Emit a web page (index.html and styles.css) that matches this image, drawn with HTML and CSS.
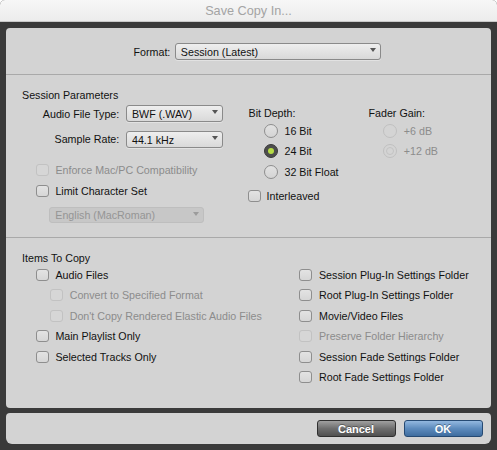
FILE: index.html
```html
<!DOCTYPE html>
<html>
<head>
<meta charset="utf-8">
<link rel="stylesheet" href="styles.css">
</head>
<body>
<div class="window">
  <div class="titlebar">Save Copy In...</div>
  <div class="frame">
    <div class="panel">
      <div class="format-row">
        <span class="format-label">Format:</span>
        <div class="select format-select"><span>Session (Latest)</span><i class="arrow"></i></div>
      </div>

      <div class="section session">
        <div class="section-title">Session Parameters</div>
        <div class="cols">
          <div class="col-left">
            <div class="field-grid">
              <span class="field-label">Audio File Type:</span>
              <div class="select small"><span>BWF (.WAV)</span><i class="arrow"></i></div>
              <span class="field-label">Sample Rate:</span>
              <div class="select small"><span>44.1 kHz</span><i class="arrow"></i></div>
            </div>
            <div class="checks indent1 compat">
              <div class="check disabled"><span class="box"></span><span>Enforce Mac/PC Compatibility</span></div>
              <div class="check"><span class="box"></span><span>Limit Character Set</span></div>
            </div>
            <div class="select charset disabled"><span>English (MacRoman)</span><i class="arrow"></i></div>
          </div>

          <div class="col-bit">
            <div class="col-title">Bit Depth:</div>
            <div class="radios">
              <div class="radio"><span class="dot"></span><span>16 Bit</span></div>
              <div class="radio on"><span class="dot"></span><span>24 Bit</span></div>
              <div class="radio"><span class="dot"></span><span>32 Bit Float</span></div>
            </div>
            <div class="check interleaved"><span class="box"></span><span>Interleaved</span></div>
          </div>

          <div class="col-fader">
            <div class="col-title">Fader Gain:</div>
            <div class="radios">
              <div class="radio disabled"><span class="dot"></span><span>+6 dB</span></div>
              <div class="radio disabled on"><span class="dot"></span><span>+12 dB</span></div>
            </div>
          </div>
        </div>
      </div>

      <div class="section items">
        <div class="section-title">Items To Copy</div>
        <div class="items-grid">
          <div class="checks indent1">
            <div class="check"><span class="box"></span><span>Audio Files</span></div>
            <div class="check disabled sub"><span class="box"></span><span>Convert to Specified Format</span></div>
            <div class="check disabled sub"><span class="box"></span><span>Don't Copy Rendered Elastic Audio Files</span></div>
            <div class="check"><span class="box"></span><span>Main Playlist Only</span></div>
            <div class="check"><span class="box"></span><span>Selected Tracks Only</span></div>
          </div>
          <div class="checks">
            <div class="check"><span class="box"></span><span>Session Plug-In Settings Folder</span></div>
            <div class="check"><span class="box"></span><span>Root Plug-In Settings Folder</span></div>
            <div class="check"><span class="box"></span><span>Movie/Video Files</span></div>
            <div class="check disabled"><span class="box"></span><span>Preserve Folder Hierarchy</span></div>
            <div class="check"><span class="box"></span><span>Session Fade Settings Folder</span></div>
            <div class="check"><span class="box"></span><span>Root Fade Settings Folder</span></div>
          </div>
        </div>
      </div>
    </div>

    <div class="buttonbar">
      <button class="btn cancel">Cancel</button>
      <button class="btn ok">OK</button>
    </div>
  </div>
</div>
</body>
</html>
```

FILE: styles.css
```css
* { box-sizing: border-box; }

html, body {
  margin: 0;
  padding: 0;
  background: #ffffff;
}

body {
  font-family: "Liberation Sans", Arial, Helvetica, sans-serif;
  font-size: 10.7px;
  color: #111111;
}

.window {
  width: 497px;
  height: 450px;
  background: #3a3a3a;
  border-radius: 5px 5px 0 0;
  overflow: hidden;
  display: flex;
  flex-direction: column;
}

.titlebar {
  height: 22px;
  line-height: 23px;
  text-align: center;
  font-size: 12.7px;
  color: #a4a4a4;
  background: linear-gradient(#f7f7f7, #ececec);
  border-bottom: 1px solid #c9c9c9;
}

.frame {
  flex: 1;
  display: flex;
  flex-direction: column;
  gap: 5px;
  padding: 6px 6px 6px 6px;
}

.panel {
  height: 380px;
  background: #d3d3d3;
  border-radius: 4px;
  display: flex;
  flex-direction: column;
}

/* Format row */
.format-row {
  height: 46px;
  display: flex;
  align-items: center;
  padding-left: 127.5px;
  padding-top: 1px;
  gap: 4.5px;
}

.select {
  height: 17px;
  display: flex;
  align-items: center;
  padding: 0 4px 0 5px;
  background: linear-gradient(#eeeeee, #d9d9d9);
  border: 1px solid #8a8a8a;
  border-radius: 3px;
  box-shadow: 0 1px 0 rgba(255, 255, 255, 0.35);
  color: #111;
}

.select span { flex: 1; padding-top: 1px; }

.arrow {
  align-self: flex-start;
  margin-top: 4px;
  width: 0;
  height: 0;
  border-left: 3.5px solid transparent;
  border-right: 3.5px solid transparent;
  border-top: 4px solid #555;
}

.format-select { width: 206px; }

/* Sections */
.section {
  border-top: 1px solid #a9a9a9;
  padding: 13px 0 13px 16px;
}

.section.session { padding-bottom: 14px; }

.section-title,
.col-title {
  height: 14px;
  line-height: 14px;
}

.cols {
  display: flex;
  align-items: flex-start;
}

.col-left { width: 226.5px; }
.col-bit { width: 120px; }
.col-fader { flex: 1; }

.field-grid {
  margin-top: 3.3px;
  display: grid;
  grid-template-columns: 97.3px 97px;
  column-gap: 6.7px;
  row-gap: 8.4px;
  align-items: center;
}

.field-label { text-align: right; }
.select.small { width: 97px; }

.compat { margin-top: 12.3px; }

.checks {
  display: flex;
  flex-direction: column;
}

.indent1 { padding-left: 13.7px; }

.check {
  height: 20.7px;
  display: flex;
  align-items: center;
  gap: 6.7px;
}

.items .check { height: 20.5px; }

.box {
  width: 13px;
  height: 12px;
  border: 1px solid #8e8e8e;
  border-radius: 3px;
  background: linear-gradient(#e3e3e3, #d6d6d6);
  flex: none;
}

.check.disabled { color: #8c8c8c; }
.check.disabled .box {
  border-color: #c2c2c2;
  background: #d6d6d6;
}

.check.sub { padding-left: 14.3px; }

.select.charset {
  width: 155px;
  height: 16px;
  margin-top: 5.3px;
  margin-left: 27.3px;
}

.select.disabled {
  background: #c7c7c7;
  border-color: #bebebe;
  box-shadow: none;
  color: #959595;
}
.select.disabled .arrow { border-top-color: #9c9c9c; }

/* Radios */
.col-bit .col-title,
.col-fader .col-title { margin-top: 4.3px; }

.radios {
  display: flex;
  flex-direction: column;
  padding-left: 15.3px;
}

.col-fader .radios { padding-left: 14.6px; }

.radio {
  height: 20.7px;
  display: flex;
  align-items: center;
  gap: 6.7px;
}

.dot {
  width: 14px;
  height: 14px;
  border-radius: 50%;
  border: 1px solid #8e8e8e;
  background: linear-gradient(#e2e2e2, #d4d4d4);
  flex: none;
  display: flex;
  align-items: center;
  justify-content: center;
}

.radio.on .dot {
  background: #4d4d4d;
  border-color: #3a3a3a;
}
.radio.on .dot::after {
  content: "";
  width: 6px;
  height: 6px;
  border-radius: 50%;
  background: #b6dc45;
}

.radio.disabled { color: #8c8c8c; }
.radio.disabled .dot {
  border-color: #c0c0c0;
  background: #d4d4d4;
}
.radio.disabled.on .dot::after {
  width: 6px;
  height: 6px;
  background: transparent;
  border: 1px solid #c3c3c3;
}

.check.interleaved {
  margin-top: 3.3px;
  margin-left: -1px;
  gap: 6px;
}

/* Items */
.items {
  flex: 1;
}

.items-grid {
  display: grid;
  grid-template-columns: 277.3px 1fr;
  align-items: start;
}

/* Buttons */
.buttonbar {
  height: 31px;
  background: #d3d3d3;
  border-radius: 4px 4px 6px 6px;
  display: flex;
  justify-content: flex-end;
  align-items: center;
  gap: 8px;
  padding-right: 8.5px;
}

.btn {
  width: 79px;
  height: 17px;
  padding: 0;
  border-radius: 3px;
  font-family: "Liberation Sans", Arial, Helvetica, sans-serif;
  font-size: 11px;
  font-weight: bold;
  color: #ffffff;
  text-shadow: 0 -1px 0 rgba(0, 0, 0, 0.35);
  cursor: default;
}

.btn.cancel {
  background: linear-gradient(#a0a0a0, #6e6e6e 50%, #505050);
  border: 1px solid #2f2f2f;
}

.btn.ok {
  background: linear-gradient(#93b8df, #5d8bbd 50%, #3f6d9f);
  border: 1px solid #264a73;
}
```
